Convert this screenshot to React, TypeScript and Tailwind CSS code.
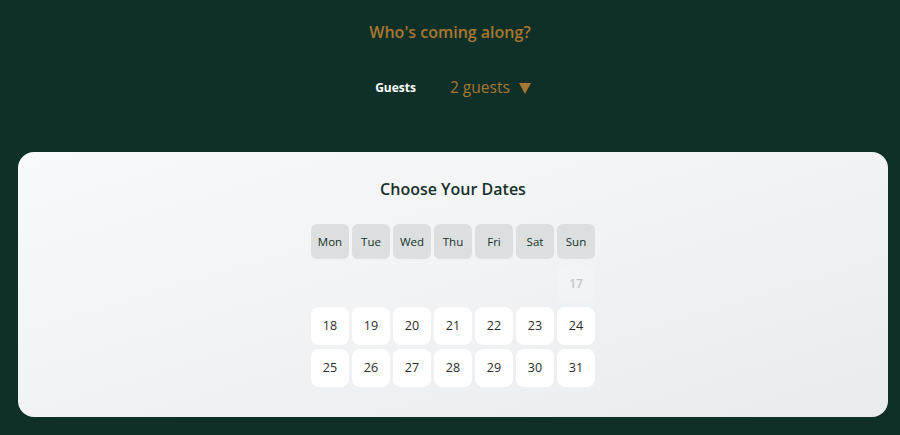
import React from "react";

const days = ["Mon", "Tue", "Wed", "Thu", "Fri", "Sat", "Sun"];
const row1 = [18, 19, 20, 21, 22, 23, 24];
const row2 = [25, 26, 27, 28, 29, 30, 31];

export default function App() {
  return (
    <div
      className="w-[900px] h-[435px] bg-[#0f3029] flex flex-col overflow-hidden"
      style={{ fontFamily: '"Open Sans", "Noto Sans", sans-serif' }}
    >
      <div className="flex flex-col items-center">
        <h2 className="mt-[20px] text-[16px] leading-[24px] font-semibold text-[#a9772f]">
          Who's coming along?
        </h2>
        <div className="mt-[32px] ml-[6px] flex items-center h-[24px]">
          <span className="text-[12px] font-bold text-white">Guests</span>
          <span className="ml-[34px] text-[15.5px] text-[#a9772f]">2 guests</span>
          <svg className="ml-[9px]" width="12" height="11" viewBox="0 0 12 11">
            <polygon points="0,0 12,0 6,11" fill="#a9772f" />
          </svg>
        </div>
      </div>
      <div className="ml-[18px] w-[870px] mt-[52px] h-[265px] rounded-[16px] bg-gradient-to-br from-[#f8f9fa] to-[#e9ecef] flex flex-col items-center">
        <h3 className="mt-[24px] text-[16px] leading-[26px] font-semibold text-[#163029]">
          Choose Your Dates
        </h3>
        <div className="mt-[22px] grid grid-cols-[repeat(7,38px)] gap-[3px]">
          {days.map((d) => (
            <div
              key={d}
              className="h-[35px] rounded-[6px] bg-[#dcdfe0] flex items-center justify-center text-[11.5px] text-[#163029]"
            >
              {d}
            </div>
          ))}
        </div>
        <div className="mt-[6px] grid grid-cols-[repeat(7,38px)] gap-x-[3px] gap-y-[4px]">
          {Array.from({ length: 6 }).map((_, i) => (
            <div key={"e" + i} className="h-[38px]" />
          ))}
          <div className="h-[38px] rounded-[8px] bg-white/15 flex items-center justify-center text-[12px] font-semibold text-[#c4c8cc]">
            17
          </div>
          {[...row1, ...row2].map((n) => (
            <div
              key={n}
              className="h-[38px] rounded-[8px] bg-white flex items-center justify-center text-[12.5px] text-[#2b2b2b]"
            >
              {n}
            </div>
          ))}
        </div>
      </div>
    </div>
  );
}
